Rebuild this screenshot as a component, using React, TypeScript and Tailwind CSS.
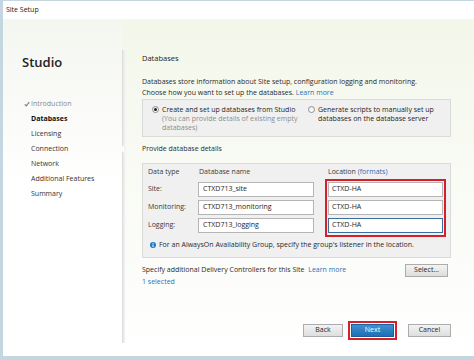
import React from 'react';

const navItems = ['Licensing', 'Connection', 'Network', 'Additional Features', 'Summary'];

const rows = [
  { label: 'Site:', db: 'CTXD713_site' },
  { label: 'Monitoring:', db: 'CTXD713_monitoring' },
  { label: 'Logging:', db: 'CTXD713_logging' },
];

const Radio = ({ checked }: { checked?: boolean }) => (
  <span className="mt-[1px] flex h-[7px] w-[7px] shrink-0 items-center justify-center rounded-full border border-[#8e8f8f] bg-gradient-to-b from-[#eaeaea] to-white">
    {checked && <span className="h-[3px] w-[3px] rounded-full bg-[#1c1c1c]" />}
  </span>
);

const Btn = ({ label, primary, wide }: { label: string; primary?: boolean; wide?: boolean }) => (
  <button
    className={
      primary
        ? 'flex h-[13px] w-[43px] items-center justify-center border border-[#1d5f98] bg-gradient-to-b from-[#3c8fd4] to-[#1f6fb3] text-[7px] text-white'
        : wide
        ? 'flex h-[13px] w-[43px] items-center justify-center border border-[#acacac] bg-gradient-to-b from-[#f3f3f3] to-[#dedede] text-[7px] text-[#1e1e1e]'
        : 'flex h-[13px] w-[40px] items-center justify-center border border-[#acacac] bg-gradient-to-b from-[#f3f3f3] to-[#dedede] text-[7px] text-[#1e1e1e]'
    }
  >
    {label}
  </button>
);

export default function App() {
  return (
    <div className="flex h-[360px] w-[474px] flex-col bg-[#c4d6e0] pl-[3px] pt-[1px] pb-[4px] font-['Segoe_UI','Open_Sans',sans-serif] text-[#1e1e1e]">
      {/* Title bar */}
      <div className="flex h-[18px] items-center bg-white pl-[3px] text-[7px] text-[#1a1a1a]">Site Setup</div>

      <div className="flex flex-1 bg-gradient-to-b from-[#f3f7ea] via-[#f9fbf5] to-white">
        {/* Left column */}
        <div className="flex w-[119px] flex-col bg-gradient-to-b from-[#f4f6f0] via-white to-white pt-[35px]">
          <div className="pl-[19px] text-[13px] font-semibold leading-[16px] text-[#222]">Studio</div>
          <div className="mt-[26px] flex flex-col pl-[28px] text-[7px] leading-[15px]">
            <div className="flex items-center text-[#8a8a8a]">
              <svg width="6" height="6" viewBox="0 0 8 8" className="-ml-[7px] mr-[1px]">
                <path d="M1 4.5 L3 6.5 L7 1.5" stroke="#7a7a7a" strokeWidth="1.4" fill="none" />
              </svg>
              Introduction
            </div>
            <div className="font-bold text-[#111]">Databases</div>
            {navItems.map((n) => (
              <div key={n} className="text-[#333]">{n}</div>
            ))}
          </div>
        </div>

        {/* Divider shadow */}
        <div className="relative mt-[31px] mb-[13px] w-[4px] bg-gradient-to-r from-[#d9d9d9] via-[#eeeeee] to-transparent">
          <span className="absolute left-[-2px] top-[95px] h-0 w-0 border-y-[4px] border-r-[4px] border-y-transparent border-r-white" />
        </div>

        {/* Right column */}
        <div className="flex flex-1 flex-col pl-[16px] pr-[23px] pt-[34px] pb-[16px] text-[7px]">
          <div className="text-[7.5px] leading-[10px] text-[#222]">Databases</div>
          <div className="mt-[14px] leading-[10.5px] text-[#2a2a2a]">
            <div>Databases store information about Site setup, configuration logging and monitoring.</div>
            <div>
              Choose how you want to set up the databases. <span className="text-[#2f6db5]">Learn more</span>
            </div>
          </div>

          <div className="mt-[1px] flex h-[38px] border border-[#dadada] bg-[#f0f0f0] pl-[9px] pt-[5px] leading-[9px]">
            <div className="flex w-[156px] shrink-0 gap-[3px]">
              <Radio checked />
              <div className="w-[146px]">
                <div>Create and set up databases from Studio</div>
                <div className="text-[#8c8c8c]">(You can provide details of existing empty databases)</div>
              </div>
            </div>
            <div className="flex flex-1 gap-[3px]">
              <Radio />
              <div className="w-[128px]">Generate scripts to manually set up databases on the database server</div>
            </div>
          </div>

          <div className="mt-[7px] leading-[10px] text-[#2a2a2a]">Provide database details</div>

          <div className="mt-[9px] flex flex-col border border-[#dadada] bg-[#f0f0f0] pl-[5px] pt-[3px] pb-[7px]">
            <div className="flex leading-[10px] text-[#3a3a3a]">
              <div className="w-[51px]">Data type</div>
              <div className="w-[129px]">Database name</div>
              <div>
                Location <span className="text-[#2f6db5]">(formats)</span>
              </div>
            </div>

            <div className="mt-[2px] flex">
              <div className="flex flex-col gap-[3px] pt-[3px]">
                {rows.map((r) => (
                  <div key={r.label} className="flex items-center">
                    <div className="w-[50px] text-[#3a3a3a]">{r.label}</div>
                    <div className="flex h-[15px] w-[116px] items-center border border-[#b5b5b5] bg-white pl-[4px]">{r.db}</div>
                  </div>
                ))}
              </div>
              <div className="ml-[11px] flex flex-col gap-[3px] border-2 border-[#d3202a] px-[1px] pt-[1px] pb-[2px]">
                {rows.map((r, i) => (
                  <div
                    key={r.label}
                    className={
                      i === 2
                        ? 'flex h-[15px] w-[115px] items-center border border-[#3b6e9d] bg-white pl-[3px]'
                        : 'flex h-[15px] w-[115px] items-center border border-[#b5b5b5] bg-white pl-[3px]'
                    }
                  >
                    CTXD-HA
                  </div>
                ))}
              </div>
            </div>

            <div className="mt-[3px] flex items-center gap-[3px] pl-[2px] leading-[10px] text-[#2a2a2a]">
              <svg width="6" height="6" viewBox="0 0 12 12">
                <circle cx="6" cy="6" r="6" fill="#1f78c8" />
                <rect x="5" y="2.2" width="2" height="1.8" fill="#fff" />
                <rect x="5" y="5" width="2" height="5" fill="#fff" />
              </svg>
              For an AlwaysOn Availability Group, specify the group's listener in the location.
            </div>
          </div>

          <div className="mt-[6px] flex items-center justify-between pr-[3px]">
            <div className="text-[#2a2a2a]">
              Specify additional Delivery Controllers for this Site <span className="ml-[2px] text-[#2f6db5]">Learn more</span>
            </div>
            <button className="flex h-[13px] w-[43px] items-center justify-center border border-[#acacac] bg-gradient-to-b from-[#f3f3f3] to-[#dedede] text-[7px]">
              Select...
            </button>
          </div>
          <div className="leading-[10px] text-[#2f6db5]">1 selected</div>

          <div className="mt-auto flex items-center justify-end">
            <Btn label="Back" />
            <div className="ml-[5px] border-2 border-[#d3202a] p-[1px]">
              <Btn label="Next" primary />
            </div>
            <div className="ml-[11px]">
              <Btn label="Cancel" wide />
            </div>
          </div>
        </div>
      </div>
    </div>
  );
}
